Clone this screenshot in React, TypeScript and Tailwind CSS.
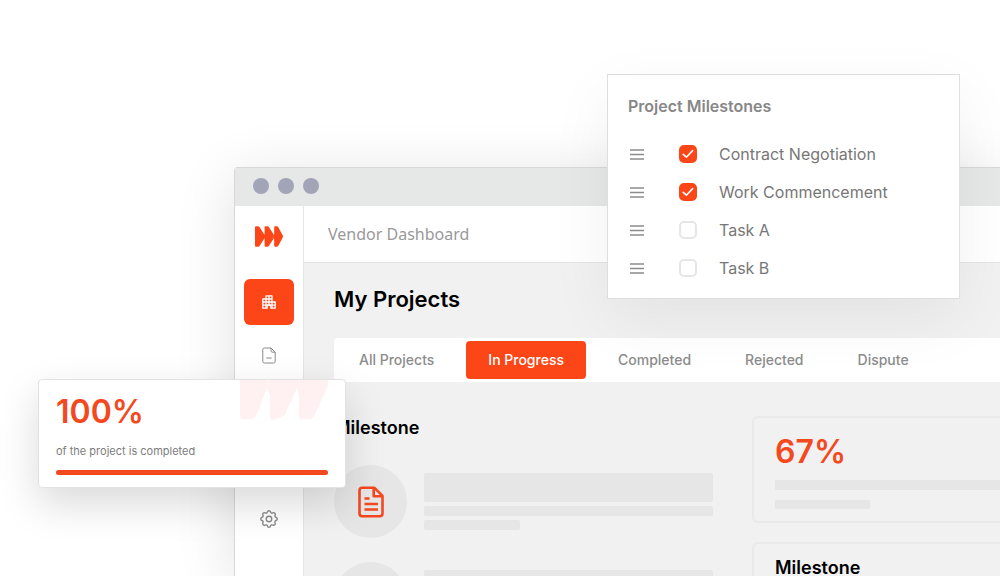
import { useState } from 'react';
import { HiOutlineCog } from 'react-icons/hi';

const tabs = ['All Projects', 'In Progress', 'Completed', 'Rejected', 'Dispute'];

const initialMilestones = [
  { id: 'contract', label: 'Contract Negotiation', done: true },
  { id: 'work', label: 'Work Commencement', done: true },
  { id: 'task-a', label: 'Task A', done: false },
  { id: 'task-b', label: 'Task B', done: false },
];

const Logo = ({ className }: { className: string }) => (
  <svg viewBox="0 0 54 40" className={className} fill="currentColor" aria-hidden="true">
    <path d="M0 2Q0 0 2 0H6Q8 0 9 2L18 16V24L9 38Q8 40 6 40H2Q0 40 0 38Z" />
    <path d="M18.5 2Q18.5 0 20.5 0H24Q26 0 27 2L36 16V24L27 38Q26 40 24 40H20.5Q18.5 40 18.5 38V26L17 20L18.5 14Z" />
    <path d="M37 2Q37 0 39 0H42Q44 0 45 2L53 17Q55 20 53 23L45 38Q44 40 42 40H39Q37 40 37 38V26L35 20L37 14Z" />
  </svg>
);

// Large logo with open gaps between the arrows, used behind the completion card
const LogoWatermark = ({ className }: { className: string }) => (
  <svg viewBox="0 0 88 68" className={className} fill="currentColor" aria-hidden="true">
    <path d="M0 0H18L28 24V34L16 64Q14 67 10 67H3Q0 67 0 64Z" />
    <path d="M30 0H48L58 24V34L46 60Q45 64 41 65L33 68Q30 68 30 65V44L27 34L30 26Z" />
    <path d="M59 0H77L87 26Q89 31 87 36L75 62Q73 67 69 67H62Q59 67 59 64V44L57 34L59 26Z" />
  </svg>
);

const BuildingIcon = () => (
  <svg viewBox="0 0 14 14" className="h-[14px] w-[14px]" fill="none" stroke="currentColor" strokeWidth="1.3" strokeLinejoin="round">
    <path d="M.8 13.2V4H4V.8H10V7H13.2V13.2H8.8V10.2H5.2V13.2Z" />
    <path d="M4 4V13M7 1V10M10 7V13M4 4H10M1 7H10M1 10.2H13" />
  </svg>
);

const FileIcon = () => (
  <svg viewBox="0 0 14 17" className="h-[17px] w-[14px]" fill="none" stroke="currentColor" strokeLinejoin="round">
    <path d="M9 1H2.5Q.8 1 .8 2.7V14.3Q.8 16 2.5 16H11.5Q13.2 16 13.2 14.3V5.2L9 1V3.7Q9 5.2 10.5 5.2H13.2" />
    <path d="M4.3 11H9.7" />
  </svg>
);

const DocumentIcon = () => (
  <svg viewBox="0 0 26 32" className="h-8 w-[26px]" fill="none" stroke="currentColor" strokeWidth="2.6">
    <path d="M16.5 1.8H4.2Q1.5 1.8 1.5 4.5V27.5Q1.5 30.2 4.2 30.2H21.8Q24.5 30.2 24.5 27.5V9.8Z" strokeLinejoin="round" />
    <path d="M15.7 2V10.2H24.3" strokeLinejoin="round" />
    <path d="M6.5 12.5H11.5M6.5 18H20M6.5 23.5H20" />
  </svg>
);

const Sidebar = () => (
  <nav className="flex w-[69px] shrink-0 flex-col items-center border-r border-[#e4e4e4] bg-white">
    <Logo className="mt-5 h-[21px] w-7 text-[#fc4618]" />
    <button
      aria-label="Projects"
      className="mt-8 flex h-[46px] w-[50px] shrink-0 items-center justify-center rounded-md bg-[#fc4618] text-white"
    >
      <BuildingIcon />
    </button>
    <button aria-label="Documents" className="mt-[22px] text-[#8a8a8a]">
      <FileIcon />
    </button>
    <button aria-label="Settings" className="mt-36 text-[#8a8a8a]">
      <HiOutlineCog className="h-[22px] w-[22px] stroke-[1.5]" />
    </button>
  </nav>
);

const MilestoneRow = () => (
  <li className="flex gap-[17px]">
    <div className="flex h-[73px] w-[73px] shrink-0 items-center justify-center rounded-full bg-[#e6e6e6] text-[#f4481e]">
      <DocumentIcon />
    </div>
    <div className="flex-1 pt-2">
      <div className="h-[29px] rounded-xs bg-[#e6e6e6]" />
      <div className="mt-1 h-[10px] rounded-xs bg-[#e6e6e6]" />
      <div className="mt-1 h-[10px] w-1/3 rounded-xs bg-[#e6e6e6]" />
    </div>
  </li>
);

const ProjectMilestones = () => {
  const [milestones, setMilestones] = useState(initialMilestones);

  const toggle = (id: string) => {
    setMilestones(milestones.map(m => (m.id === id ? { ...m, done: !m.done } : m)));
  };

  return (
    <section className="absolute top-[74px] right-10 w-[353px] border border-[#dedede] bg-white px-5 pt-[19px] pb-[11px] shadow-[0_20px_60px_rgba(0,0,0,0.06)]">
      <h2 className="text-base leading-6 font-semibold text-[#878787]">Project Milestones</h2>
      <ul className="mt-[17px]">
        {milestones.map(m => (
          <li key={m.id} className="flex h-[38px] items-center">
            <svg viewBox="0 0 14 11" className="ml-[2px] h-[11px] w-[14px] text-[#8c8c8c]" stroke="currentColor" strokeWidth="1.3">
              <path d="M0 1H14M0 5.5H14M0 10H14" />
            </svg>
            <span className="relative ml-[35px] h-[18px] w-[18px]">
              <input
                id={m.id}
                type="checkbox"
                checked={m.done}
                onChange={() => toggle(m.id)}
                className="block h-[18px] w-[18px] appearance-none rounded-[5px] border-2 border-[#e6e6e6] bg-white checked:border-[#fc4618] checked:bg-[#fc4618]"
              />
              {m.done && (
                <svg viewBox="0 0 18 18" className="pointer-events-none absolute inset-0" fill="none" stroke="white" strokeWidth="1.6">
                  <path d="M4.2 9.4L7.4 12.2L13.6 5.6" strokeLinecap="round" />
                </svg>
              )}
            </span>
            <label htmlFor={m.id} className="ml-[22px] text-base text-[#777]">
              {m.label}
            </label>
          </li>
        ))}
      </ul>
    </section>
  );
};

const CompletionCard = () => (
  <section className="absolute top-[379px] left-[38px] w-[308px] overflow-hidden rounded-sm border border-[#e2e2e2] bg-white px-[17px] py-3 shadow-[0_16px_40px_rgba(0,0,0,0.15)]">
    <LogoWatermark className="absolute -top-7 right-[17px] h-[68px] w-[88px] text-[#fff1f1]" />
    <p className="text-[32px] leading-10 font-semibold text-[#f4481e]">100%</p>
    <p className="mt-[11px] text-[11px] leading-4 text-[#7d7d7d]">of the project is completed</p>
    <div className="mt-[11px] h-[5px] rounded-full bg-[#f4481e]" />
  </section>
);

const App = () => {
  const [activeTab, setActiveTab] = useState('In Progress');

  return (
    <div className="relative flex h-screen flex-col overflow-hidden bg-white pt-[167px] pl-[234px] font-[Inter,sans-serif]">
      <div className="flex min-h-0 flex-1 flex-col rounded-tl-sm border-t border-l border-[#d8d8d8] shadow-[0_10px_60px_rgba(0,0,0,0.12)]">
        <div className="flex h-[38px] shrink-0 items-center gap-[9px] bg-[#e6e7e7] pb-[2px] pl-[18px]">
          <span className="h-4 w-4 rounded-full bg-[#a1a5b7]" />
          <span className="h-4 w-4 rounded-full bg-[#a1a5b7]" />
          <span className="h-4 w-4 rounded-full bg-[#a1a5b7]" />
        </div>

        <div className="flex min-h-0 flex-1">
          <Sidebar />
          <div className="flex min-w-0 flex-1 flex-col bg-[#f1f1f1]">
            <header className="flex h-[57px] shrink-0 items-center border-b border-[#e4e4e4] bg-white px-6">
              <h1 className="font-['Noto_Sans',sans-serif] text-base text-[#999]">Vendor Dashboard</h1>
            </header>

            <main className="min-h-0 flex-1 overflow-hidden pt-[21px] pl-[30px]">
              <h2 className="text-[22px] leading-[30px] font-semibold text-black">My Projects</h2>

              <div role="tablist" className="mt-6 flex h-11 items-center gap-[10px] rounded-l-sm bg-white pl-[3px]">
                {tabs.map(tab => (
                  <button
                    key={tab}
                    role="tab"
                    aria-selected={activeTab === tab}
                    onClick={() => setActiveTab(tab)}
                    className={`h-[38px] rounded-sm px-[22px] text-sm font-medium whitespace-nowrap ${
                      activeTab === tab ? 'bg-[#fc4618] text-white' : 'text-[#8c8c8c]'
                    }`}
                  >
                    {tab}
                  </button>
                ))}
              </div>

              <div className="flex gap-[39px] pt-[34px]">
                <section className="flex-1">
                  <h3 className="text-lg leading-6 font-semibold text-black">Milestone</h3>
                  <ul className="mt-[25px] space-y-6">
                    <MilestoneRow />
                    <MilestoneRow />
                  </ul>
                </section>

                <div className="w-[248px] shrink-0 space-y-[19px]">
                  <section className="h-[107px] rounded-l-md border-2 border-r-0 border-[#e9e9e9] pt-[14px] pl-[21px]">
                    <p className="text-[32px] leading-10 font-semibold text-[#f4481e]">67%</p>
                    <div className="mt-2 h-[10px] bg-[#e6e6e6]" />
                    <div className="mt-[10px] h-[9px] w-[95px] bg-[#e6e6e6]" />
                  </section>
                  <section className="h-[107px] rounded-l-md border-2 border-r-0 border-[#e9e9e9] pt-4 pl-[21px]">
                    <h3 className="text-lg leading-4 font-semibold text-black">Milestone</h3>
                  </section>
                </div>
              </div>
            </main>
          </div>
        </div>
      </div>

      <ProjectMilestones />
      <CompletionCard />
    </div>
  );
};

export default App;
